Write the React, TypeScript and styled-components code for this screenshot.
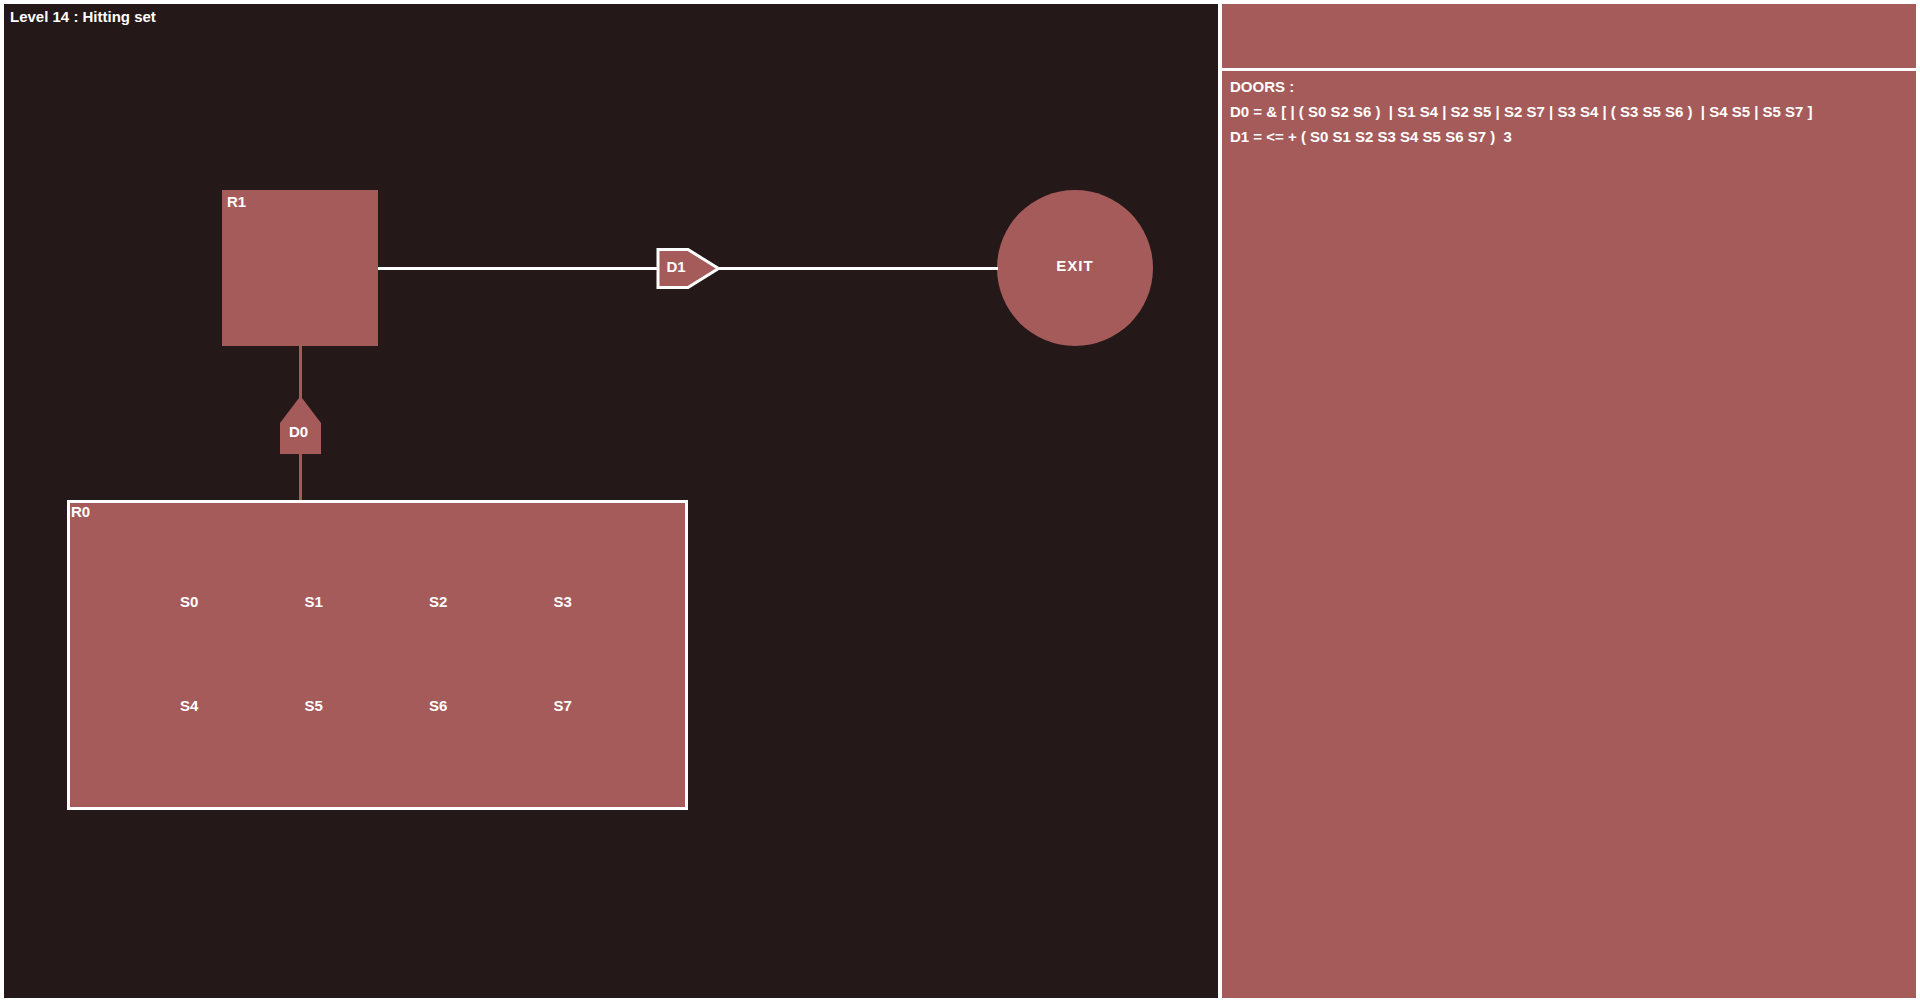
import React from "react";
import styled, { createGlobalStyle } from "styled-components";

const RED = "#a55b5a";
const DARK = "#241818";

const GlobalStyle = createGlobalStyle`
  html, body {
    margin: 0;
    padding: 0;
    background: #ffffff;
  }
  body {
    font-family: "Liberation Sans", Arial, sans-serif;
    font-weight: bold;
    font-size: 15px;
    color: #ffffff;
  }
`;

const Screen = styled.div`
  display: flex;
  gap: 4px;
  height: 1001px;
  box-sizing: border-box;
  padding: 4px 4px 3px 4px;
  background: #ffffff;
`;

const Canvas = styled.div`
  position: relative;
  width: 1214px;
  flex-shrink: 0;
  background: ${DARK};
  overflow: hidden;
`;

const Title = styled.div`
  padding: 4px 6px;
  line-height: 17px;
`;

const Side = styled.div`
  flex: 1;
  display: flex;
  flex-direction: column;
  gap: 3px;
`;

const InfoBox = styled.div`
  height: 64px;
  background: ${RED};
`;

const DoorsPanel = styled.div`
  flex: 1;
  background: ${RED};
  padding: 2.5px 8px;
  line-height: 25px;
  white-space: pre;
`;

const Links = styled.svg`
  position: absolute;
  left: 0;
  top: 0;
  width: 100%;
  height: 100%;
  pointer-events: none;
`;

const Room = styled.div<{ $x: number; $y: number; $w: number; $h: number; $outlined?: boolean; $pad: string }>`
  position: absolute;
  left: ${(p) => p.$x}px;
  top: ${(p) => p.$y}px;
  width: ${(p) => p.$w}px;
  height: ${(p) => p.$h}px;
  box-sizing: border-box;
  background: ${RED};
  border: ${(p) => (p.$outlined ? "3px solid #ffffff" : "none")};
  padding: ${(p) => p.$pad};
`;

const RoomLabel = styled.div`
  position: absolute;
  left: 0;
  top: 0;
  padding: inherit;
  line-height: 17px;
`;

const SwitchGrid = styled.div`
  display: grid;
  grid-template-columns: repeat(4, 124.5px);
  grid-template-rows: repeat(2, 104px);
  box-sizing: border-box;
  padding: 46px 0 0 56px;
  place-items: center;
`;

const Switch = styled.span`
  line-height: 17px;
`;

const Exit = styled.div`
  position: absolute;
  left: 993px;
  top: 186px;
  width: 156px;
  height: 156px;
  border-radius: 50%;
  background: ${RED};
  display: flex;
  align-items: center;
  justify-content: center;
  letter-spacing: 1px;
  padding-bottom: 6px;
  box-sizing: border-box;
`;

const switches = ["S0", "S1", "S2", "S3", "S4", "S5", "S6", "S7"];

const doors = [
  "D0 = & [ | ( S0 S2 S6 )  | S1 S4 | S2 S5 | S2 S7 | S3 S4 | ( S3 S5 S6 )  | S4 S5 | S5 S7 ]",
  "D1 = <= + ( S0 S1 S2 S3 S4 S5 S6 S7 )  3",
];

export default function App() {
  return (
    <>
      <GlobalStyle />
      <Screen>
        <Canvas>
          <Title>Level 14 : Hitting set</Title>

          <Room $x={218} $y={186} $w={156} $h={156} $pad="3px 5px">
            <RoomLabel>R1</RoomLabel>
          </Room>

          <Room $x={63} $y={496} $w={621} $h={310} $outlined $pad="0 1px">
            <RoomLabel>R0</RoomLabel>
            <SwitchGrid>
              {switches.map((s) => (
                <Switch key={s}>{s}</Switch>
              ))}
            </SwitchGrid>
          </Room>

          <Exit>EXIT</Exit>

          <Links>
            <line x1={374} y1={264.5} x2={994} y2={264.5} stroke="#ffffff" strokeWidth={3} />
            <line x1={296.5} y1={342} x2={296.5} y2={496} stroke={RED} strokeWidth={3} />

            <g transform="translate(652.5 244)">
              <polygon
                points="1.5,1.5 31.5,1.5 62,20.5 31.5,39.5 1.5,39.5"
                fill={RED}
                stroke="#ffffff"
                strokeWidth={3}
              />
              <text x={10} y={24} fill="#ffffff" fontSize={15} fontWeight="bold" fontFamily="Liberation Sans, Arial, sans-serif">
                D1
              </text>
            </g>

            <g transform="translate(276 392)">
              <polygon points="0,58 0,27 20.5,0 41,27 41,58" fill={RED} />
              <text x={9} y={41} fill="#ffffff" fontSize={15} fontWeight="bold" fontFamily="Liberation Sans, Arial, sans-serif">
                D0
              </text>
            </g>
          </Links>
        </Canvas>

        <Side>
          <InfoBox />
          <DoorsPanel>
            <div>DOORS :</div>
            {doors.map((d) => (
              <div key={d}>{d}</div>
            ))}
          </DoorsPanel>
        </Side>
      </Screen>
    </>
  );
}
